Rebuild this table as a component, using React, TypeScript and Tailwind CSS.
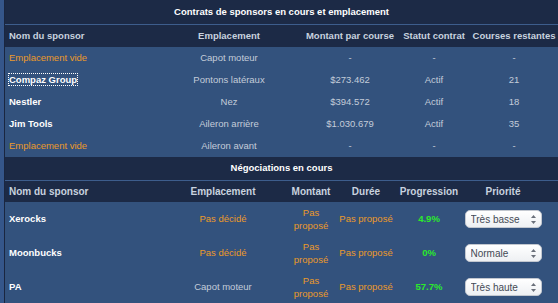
import { useState } from "react";

const ORANGE = "text-[#eb9a2a]";

type Contract = {
  name: string | null;
  slot: string;
  amount: string;
  status: string;
  races: string;
};

const contracts: Contract[] = [
  { name: null, slot: "Capot moteur", amount: "-", status: "-", races: "-" },
  { name: "Compaz Group", slot: "Pontons latéraux", amount: "$273.462", status: "Actif", races: "21" },
  { name: "Nestler", slot: "Nez", amount: "$394.572", status: "Actif", races: "18" },
  { name: "Jim Tools", slot: "Aileron arrière", amount: "$1.030.679", status: "Actif", races: "35" },
  { name: null, slot: "Aileron avant", amount: "-", status: "-", races: "-" },
];

type Nego = {
  name: string;
  slot: string | null;
  progress: string;
  priority: string;
};

const negos: Nego[] = [
  { name: "Xerocks", slot: null, progress: "4.9%", priority: "Très basse" },
  { name: "Moonbucks", slot: null, progress: "0%", priority: "Normale" },
  { name: "PA", slot: "Capot moteur", progress: "57.7%", priority: "Très haute" },
];

const priorities = ["Très basse", "Basse", "Normale", "Haute", "Très haute"];

function PrioritySelect({ initial }: { initial: string }) {
  const [value, setValue] = useState(initial);
  return (
    <div className="relative mx-auto h-[18px] w-[77px]">
      <select
        value={value}
        onChange={(e) => setValue(e.target.value)}
        className="h-full w-full appearance-none rounded-[5px] border border-[#c2c7cf] bg-gradient-to-b from-white to-[#eef0f3] pl-[5px] text-left text-[10px] text-[#444a55] outline-none"
      >
        {priorities.map((p) => (
          <option key={p}>{p}</option>
        ))}
      </select>
      <svg
        className="pointer-events-none absolute right-[5px] top-[3px]"
        width="7"
        height="12"
        viewBox="0 0 7 12"
      >
        <path d="M3.5 2 L6 5 H1 Z" fill="#6a707a" />
        <path d="M3.5 11 L6 8 H1 Z" fill="#6a707a" />
      </svg>
    </div>
  );
}

function SectionTitle({ children, h }: { children: string; h: string }) {
  return (
    <div className={`flex ${h} items-center justify-center border-b border-[#3d5d8c] bg-[#1c2a46] text-[9.5px] font-bold text-white`}>
      {children}
    </div>
  );
}

export default function App() {
  return (
    <div
      className="flex h-[303px] w-[558px] overflow-hidden bg-[#35568a]"
      style={{ fontFamily: '"Liberation Sans", Arial, sans-serif' }}
    >
      <div className="w-[4px] shrink-0" />
      <div className="flex-1 border-l border-[#1a2640] bg-[#33527d]">
        {/* Current contracts */}
        <SectionTitle h="h-[25px]">Contrats de sponsors en cours et emplacement</SectionTitle>
        <table className="w-full table-fixed border-collapse text-[9.5px]">
          <colgroup>
            <col className="w-[155px]" />
            <col className="w-[138px]" />
            <col className="w-[104px]" />
            <col className="w-[64px]" />
            <col />
          </colgroup>
          <thead>
            <tr className="h-[22px] bg-[#1c2a46] font-bold text-[#c8d2df]">
              <th className="pl-[4px] text-left">Nom du sponsor</th>
              <th>Emplacement</th>
              <th className="whitespace-nowrap">Montant par course</th>
              <th className="whitespace-nowrap">Statut contrat</th>
              <th className="whitespace-nowrap pl-[4px]">Courses restantes</th>
            </tr>
          </thead>
          <tbody>
            {contracts.map((c, i) => (
              <tr key={i} className="h-[22px] text-center text-[#c3ccd9]">
                <td className="pl-[4px] text-left">
                  {c.name ? (
                    <span
                      className={`font-bold text-white ${
                        c.name === "Compaz Group" ? "outline outline-1 outline-dotted outline-white" : ""
                      }`}
                    >
                      {c.name}
                    </span>
                  ) : (
                    <span className={ORANGE}>Emplacement vide</span>
                  )}
                </td>
                <td>{c.slot}</td>
                <td>{c.amount}</td>
                <td>{c.status}</td>
                <td className="pl-[4px]">{c.races}</td>
              </tr>
            ))}
          </tbody>
        </table>

        {/* Negotiations */}
        <SectionTitle h="h-[24px]">Négociations en cours</SectionTitle>
        <table className="w-full table-fixed border-collapse text-[9.5px]">
          <colgroup>
            <col className="w-[157px]" />
            <col className="w-[122px]" />
            <col className="w-[54px]" />
            <col className="w-[56px]" />
            <col className="w-[70px]" />
            <col />
          </colgroup>
          <thead>
            <tr className="h-[21px] bg-[#1c2a46] text-[10px] font-bold text-[#c8d2df]">
              <th className="pl-[4px] text-left">Nom du sponsor</th>
              <th>Emplacement</th>
              <th>Montant</th>
              <th>Durée</th>
              <th>Progression</th>
              <th className="pr-[16px]">Priorité</th>
            </tr>
          </thead>
          <tbody>
            {negos.map((n) => (
              <tr key={n.name} className="h-[34px] text-center">
                <td className="pl-[4px] text-left font-bold text-white">{n.name}</td>
                <td className={n.slot ? "text-[#c3ccd9]" : ORANGE}>{n.slot ?? "Pas décidé"}</td>
                <td className={`px-[6px] leading-[13px] ${ORANGE}`}>Pas proposé</td>
                <td className={`whitespace-nowrap ${ORANGE}`}>Pas proposé</td>
                <td className="font-bold text-[#2bea2b]">{n.progress}</td>
                <td className="pr-[16px]">
                  <PrioritySelect initial={n.priority} />
                </td>
              </tr>
            ))}
          </tbody>
        </table>
      </div>
    </div>
  );
}
